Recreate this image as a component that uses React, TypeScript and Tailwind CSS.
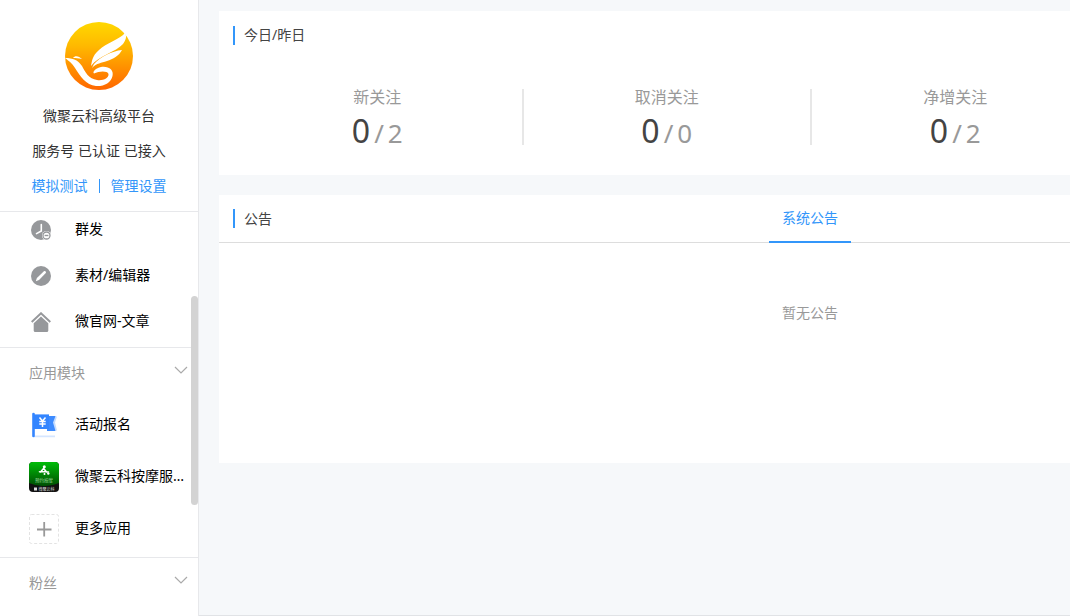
import React from 'react';

const stats = [
  { label: '新关注', today: 0, yesterday: 2 },
  { label: '取消关注', today: 0, yesterday: 0 },
  { label: '净增关注', today: 0, yesterday: 2 },
];

function Logo() {
  return (
    <svg className="w-[68px] h-[68px]" viewBox="0 0 68 68" role="img" aria-label="微聚云科">
      <defs>
        <linearGradient id="logo-fill" x1="0" y1="0" x2="0" y2="1">
          <stop offset="0" stopColor="#ffd800" />
          <stop offset="0.35" stopColor="#ffb900" />
          <stop offset="1" stopColor="#ff6600" />
        </linearGradient>
      </defs>
      <circle cx="34" cy="34" r="34" fill="url(#logo-fill)" />
      <g fill="#fff">
        <path d="M60 11C55 17 41 21 34 28C27 34 27 39 26 44C33 34 51 30 58 22C61 18 62 14 60 11Z" />
        <path d="M57 28C47 29 35 35 29 42L27 46C32 41 36 41 42 39C48 37 54 34 57 28Z" />
        <path d="M8 36C10 33 14 34 17 37C13 36 11 36 8 36Z" />
        <path d="M0 36C8 36 13 38 17 44C20 50 24 57 32 58C38 59 44 56 43.500 52C42.500 48.500 34 49 29 51.500C27 50 31 46 36 45C44 44 49 48 47.500 54C46 61 39 64.500 31 64C21 63 15 54 10 46C7 41 4 39 0 36Z" />
      </g>
    </svg>
  );
}

function BroadcastIcon() {
  return (
    <svg className="w-5 h-5" viewBox="0 0 20 20" fill="none">
      <circle cx="10" cy="10" r="10" fill="#96989b" />
      <path d="M10.300 4.500v6.500L5.500 13.600" stroke="#fff" strokeWidth="1.600" strokeLinecap="round" />
      <circle cx="15.500" cy="15.500" r="4.500" fill="#fff" />
      <circle cx="15.500" cy="15.500" r="3.500" stroke="#96989b" strokeWidth="1.300" />
      <path d="M13.600 15.500h3.800" stroke="#96989b" strokeWidth="1.400" />
    </svg>
  );
}

function EditorIcon() {
  return (
    <svg className="w-5 h-5" viewBox="0 0 20 20">
      <circle cx="10" cy="10" r="10" fill="#96989b" />
      <path d="M4.800 15.300l1.100-3.400L12.900 5.200c1.200-.9 2.700.5 1.900 1.700L8 14z" fill="#fff" />
    </svg>
  );
}

function HomeIcon() {
  return (
    <svg className="w-5 h-5" viewBox="0 0 20 20">
      <path d="M.7 10L10 1.300 19.300 10" fill="none" stroke="#96989b" strokeWidth="2" />
      <path d="M10 4.500l7.300 6.700v7.300c0 .9-.6 1.500-1.500 1.500H4.200c-.9 0-1.500-.6-1.500-1.500v-7.300z" fill="#96989b" />
    </svg>
  );
}

function FlagIcon() {
  return (
    <svg className="w-[30px] h-[30px]" viewBox="0 0 30 30" fill="none">
      <path d="M6 25.500h20v1.700H5z" fill="#d5e6ff" />
      <path d="M24 6.500h4l-2 6 2 8h-4z" fill="#c4dcff" />
      <path d="M18 6h8.500l-2.500 6.500 2.500 8.500H18z" fill="#3d8bff" />
      <path d="M5 4.400h15V19H5z" fill="#3385ff" />
      <path d="M4.500 4v22" stroke="#3385ff" strokeWidth="2.600" strokeLinecap="round" />
      <path d="M10.500 7.500l3 3.500 3-3.500M13.500 11v6M10.300 11.400h6.400M10.300 14h6.400" stroke="#fff" strokeWidth="1.500" />
    </svg>
  );
}

function MassageIcon() {
  return (
    <svg className="w-[30px] h-[30px] rounded-sm" viewBox="0 0 30 30">
      <defs>
        <linearGradient id="massage-fill" x1="0" y1="0" x2="0" y2="1">
          <stop offset="0" stopColor="#00bd08" />
          <stop offset="1" stopColor="#004d03" />
        </linearGradient>
      </defs>
      <rect width="30" height="30" fill="#111" />
      <path d="M0 0h30v21Q15 27.500 0 21z" fill="url(#massage-fill)" />
      <circle cx="15.300" cy="4.800" r="1.500" fill="#fff" />
      <path d="M15 6l-3.500 4M10.500 9.800h6M15.500 7.500l2 2.500h2" fill="none" stroke="#fff" strokeWidth="1.600" strokeLinecap="round" />
      <circle cx="15.500" cy="12" r="1" fill="#fff" />
      <circle cx="19.300" cy="11.600" r="1.200" fill="#fff" />
      <text x="15" y="20" textAnchor="middle" fontSize="4.500" fill="#9bd79c">预约按摩</text>
      <rect x="5" y="25.500" width="3" height="3" fill="#ddd" />
      <text x="17.500" y="28.500" textAnchor="middle" fontSize="4" fill="#ddd">微聚云科</text>
    </svg>
  );
}

function MoreIcon() {
  return (
    <svg className="w-[30px] h-[30px]" viewBox="0 0 30 30" fill="none">
      <rect x="0.5" y="0.5" width="29" height="29" rx="2" stroke="#e3e3e3" strokeDasharray="3 2" />
      <path d="M8 15.500h14.500M15.200 8v14.500" stroke="#999" strokeWidth="1.800" />
    </svg>
  );
}

function NavItem({ icon, label, tall = false }: { icon: React.ReactNode; label: string; tall?: boolean }) {
  return (
    <li>
      <a href="#" className={`flex items-center pl-[29px] pr-3 ${tall ? 'h-[52px]' : 'h-[46px]'}`}>
        <span className="w-[30px] shrink-0 flex pt-0.5">
          <span className={tall ? '' : 'pl-0.5'}>{icon}</span>
        </span>
        <span className="ml-4 truncate">{label}</span>
      </a>
    </li>
  );
}

function SectionTitle({ label }: { label: string }) {
  return (
    <button type="button" className="w-full h-[50px] flex items-center justify-between pl-[29px] pr-2.5 text-[#999]">
      {label}
      <svg className="w-[14px] h-2 mb-1.5" viewBox="0 0 14 8" fill="none">
        <path d="M1 1l6 6 6-6" stroke="#aaa" strokeWidth="1.200" />
      </svg>
    </button>
  );
}

function Sidebar() {
  return (
    <aside className="relative w-[199px] h-screen shrink-0 flex flex-col bg-white border-r border-[#e7e8eb]">
      <div className="pt-[22px] pb-2 flex flex-col items-center border-b border-[#e7e8eb] leading-[35px]">
        <div className="mb-2">
          <Logo />
        </div>
        <p>微聚云科高级平台</p>
        <p>服务号 已认证 已接入</p>
        <div className="flex items-center gap-[11px] text-[#3296fa]">
          <a href="#">模拟测试</a>
          <span className="w-px h-3.5 bg-[#3296fa]" />
          <a href="#">管理设置</a>
        </div>
      </div>

      {/* Menu */}
      <nav className="flex-1 overflow-hidden text-black">
        <ul className="-mt-1.5 pb-[3px] border-b border-[#e7e8eb]">
          <NavItem icon={<BroadcastIcon />} label="群发" />
          <NavItem icon={<EditorIcon />} label="素材/编辑器" />
          <NavItem icon={<HomeIcon />} label="微官网-文章" />
        </ul>
        <SectionTitle label="应用模块" />
        <ul className="pb-[3px] border-b border-[#e7e8eb]">
          <NavItem tall icon={<FlagIcon />} label="活动报名" />
          <NavItem tall icon={<MassageIcon />} label="微聚云科按摩服务" />
          <NavItem tall icon={<MoreIcon />} label="更多应用" />
        </ul>
        <SectionTitle label="粉丝" />
      </nav>

      {/* Scrollbar thumb */}
      <div className="absolute right-0 top-[296px] w-[7px] h-[209px] rounded-sm bg-[#d3d3d3]" />
    </aside>
  );
}

function PanelTitle({ children }: { children: React.ReactNode }) {
  return (
    <h2 className="flex items-center gap-[9px] text-[#444]">
      <span className="w-0.5 h-[19px] bg-[#3296fa]" />
      {children}
    </h2>
  );
}

export default function App() {
  return (
    <div className="flex min-h-screen overflow-hidden bg-[#f6f8fa] text-sm text-[#333] font-['Noto_Sans','Noto_Sans_CJK_SC',sans-serif]">
      <Sidebar />

      <main className="flex-1 min-w-0 overflow-hidden pl-5 pt-[11px] border-b border-[#e1e3e6]">
        <div className="min-w-[1182px] space-y-5">
          {/* Today / yesterday */}
          <section className="bg-white px-3.5 pt-3.5 pb-[30px]">
            <PanelTitle>今日/昨日</PanelTitle>
            <div className="mt-11 grid grid-cols-4">
              {stats.map((s, i) => (
                <div
                  key={s.label}
                  className={`h-14 flex flex-col items-center ${i > 0 ? 'border-l-2 border-[#e7e7e7]' : ''}`}
                >
                  <p className="text-base leading-4 text-[#999]">{s.label}</p>
                  <p className="mt-2 flex items-baseline gap-1 text-[26px] leading-9 text-[#999]">
                    <span className="text-[32px] text-[#444]">{s.today}</span>
                    <span>/</span>
                    <span>{s.yesterday}</span>
                  </p>
                </div>
              ))}
            </div>
          </section>

          {/* Notices */}
          <section className="bg-white">
            <div className="grid grid-cols-[1fr_auto_1fr] items-center h-12 px-3.5 border-b border-[#ddd]">
              <PanelTitle>公告</PanelTitle>
              <button type="button" className="h-12 px-[13px] -mb-px border-b-2 border-[#3296fa] text-[#3296fa]">
                系统公告
              </button>
            </div>
            <p className="h-[220px] pt-[60px] text-center text-[#999]">暂无公告</p>
          </section>
        </div>
      </main>
    </div>
  );
}
